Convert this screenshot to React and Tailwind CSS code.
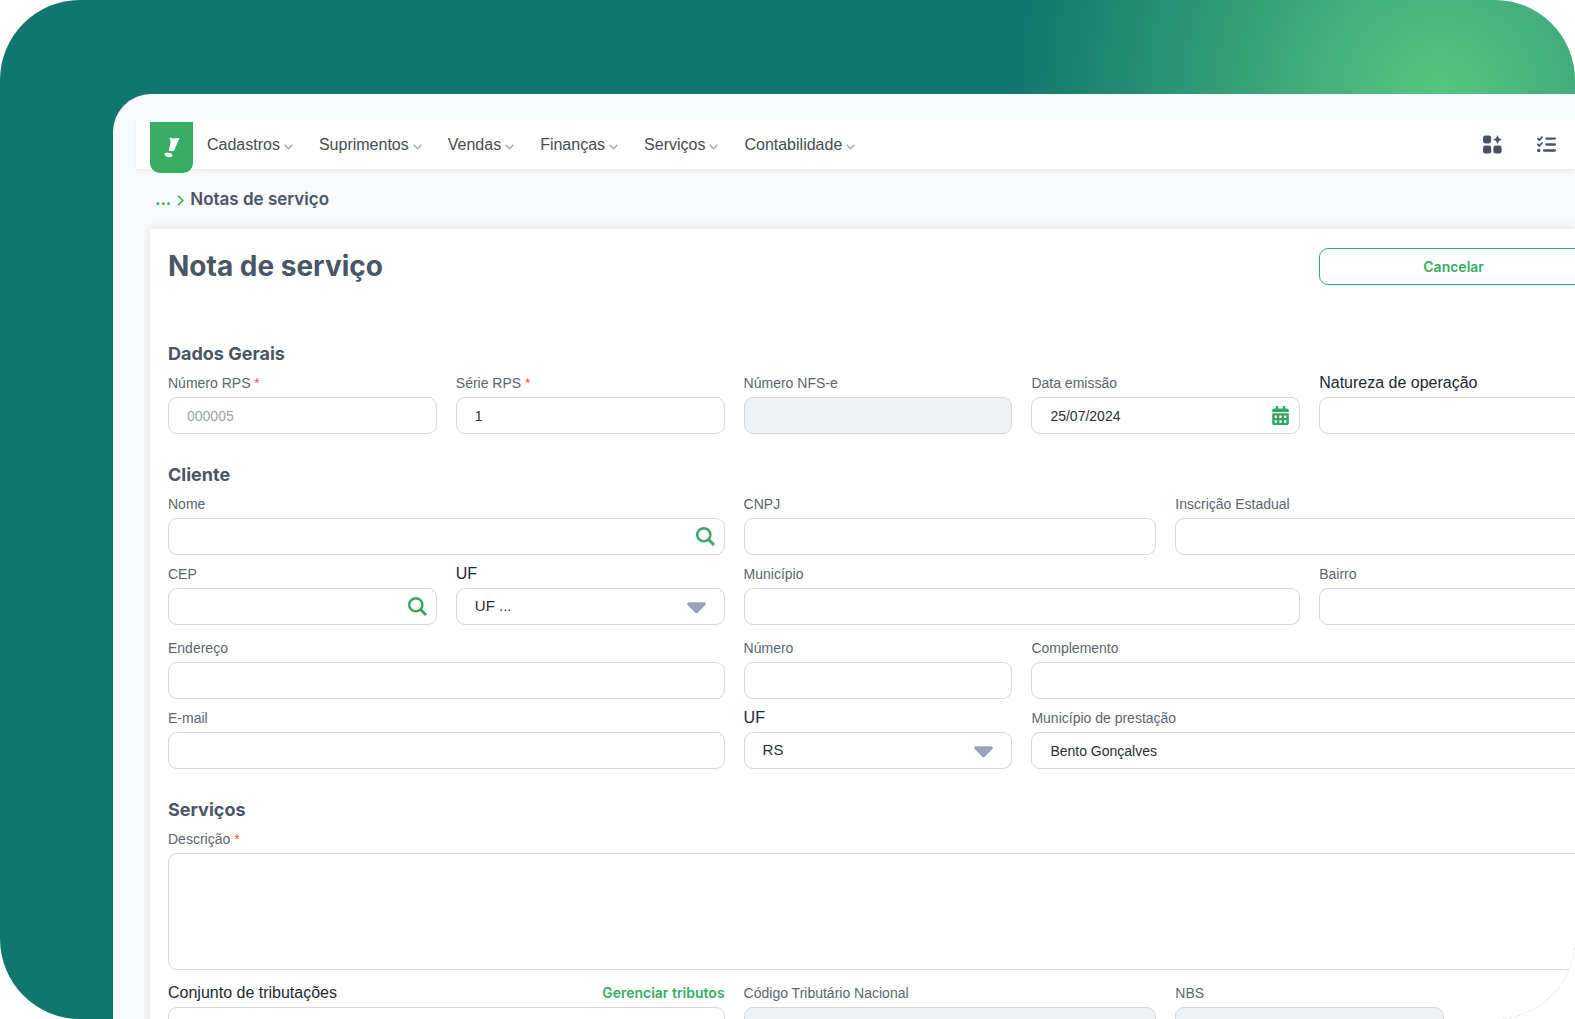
import { useState } from "react";
import { FaCalendarAlt } from "react-icons/fa";
import { FaListCheck } from "react-icons/fa6";

const menus = ["Cadastros", "Suprimentos", "Vendas", "Finanças", "Serviços", "Contabilidade"];

const Logo = () => (
  <a
    href="#"
    aria-label="Início"
    className="ml-[14px] mt-[2px] flex h-[51px] w-[43px] shrink-0 items-center justify-center self-start rounded-b-[10px] bg-[#36ad63]"
  >
    <svg width="16" height="21" viewBox="0 0 16 21" fill="#fff">
      <path d="M5.4 0.4 L9 1.4 L15.6 1 L14.4 3.6 L10.2 13.6 Q7.4 14.8 4.8 13.4 L6.6 5 L6.2 2.6 Z" />
      <ellipse cx="4.4" cy="17.8" rx="4.1" ry="2.2" transform="rotate(12 4.4 17.8)" />
    </svg>
  </a>
);

const AppsIcon = () => (
  <svg width="19" height="19" viewBox="0 0 19 19" fill="currentColor">
    <rect x="0" y="0.5" width="8.2" height="8" rx="2.4" />
    <rect x="0" y="10.6" width="8.2" height="8" rx="2.4" />
    <rect x="10.4" y="10.6" width="8.2" height="8" rx="2.4" />
    <path d="M14.5 0 L15.9 3.2 L19 4.6 L15.9 6 L14.5 9.2 L13.1 6 L10 4.6 L13.1 3.2 Z" />
  </svg>
);

const SearchIcon = () => (
  <svg width="19" height="19" viewBox="0 0 19 19" fill="none" stroke="currentColor">
    <circle cx="7.8" cy="7.8" r="6.6" strokeWidth="2.4" />
    <path d="M12.6 12.6 L18 18" strokeWidth="2.8" />
  </svg>
);

const Caret = () => (
  <svg
    width="19"
    height="12"
    viewBox="0 0 20 12"
    className="pointer-events-none absolute right-[19px] top-[14px] fill-[#98a2ba]"
  >
    <path d="M2 0 H18 C19.8 0 20.4 1.8 19.2 2.9 L11.4 11 C10.6 11.8 9.4 11.8 8.6 11 L0.8 2.9 C-0.4 1.8 0.2 0 2 0 Z" />
  </svg>
);

const control =
  "block w-full rounded-[9px] border border-[#d3d7dc] bg-white px-[18px] text-[#2b2f36] outline-none focus:border-[#36ad63]";

const Field = ({ id, label, span, strong, required, link, children }) => (
  <div className={span}>
    <div className="mb-1 flex items-center justify-between">
      <label
        htmlFor={id}
        className={
          strong
            ? "text-base leading-5 text-[#1f2733]"
            : "text-sm leading-5 text-[#5c6570]"
        }
      >
        {label}
        {required && <span className="text-[#f0524a]"> *</span>}
      </label>
      {link}
    </div>
    <div className="relative">{children}</div>
  </div>
);

const TextField = ({ id, label, span, strong, required, value = "", placeholder, disabled, icon, action, link }) => {
  const [text, setText] = useState(value);

  return (
    <Field id={id} label={label} span={span} strong={strong} required={required} link={link}>
      <input
        id={id}
        type="text"
        value={text}
        placeholder={placeholder}
        disabled={disabled}
        onChange={(e) => setText(e.target.value)}
        className={`${control} h-[37px] text-sm placeholder:text-[#9ca3af] disabled:bg-[#eff2f5]`}
      />
      {icon && (
        <button
          type="button"
          aria-label={action}
          className="absolute right-[10px] top-[9px] flex h-[19px] w-[19px] items-center justify-center text-[#36a562]"
        >
          {icon}
        </button>
      )}
    </Field>
  );
};

const SelectField = ({ id, label, span, options }) => (
  <Field id={id} label={label} span={span} strong>
    <select id={id} className={`${control} h-[37px] appearance-none text-[15px]`}>
      {options.map((option) => (
        <option key={option}>{option}</option>
      ))}
    </select>
    <Caret />
  </Field>
);

const Row = ({ children }) => <div className="grid grid-cols-10 gap-x-[19px]">{children}</div>;

const Section = ({ title, children }) => (
  <section className="mb-[29px]">
    <h2 className="mb-[7px] font-[Inter,sans-serif] text-lg font-bold leading-6 text-[#4a5565]">{title}</h2>
    {children}
  </section>
);

const App = () => {
  return (
    <div className="h-screen overflow-hidden rounded-[80px] bg-[#11766e] bg-[radial-gradient(circle_430px_at_right_135px_top_95px,#58c680,#11766e)] pl-[113px] pt-[94px] font-['Liberation_Sans',Arial,sans-serif]">
      <div className="min-h-full rounded-tl-[38px] bg-[#f9fafc] pt-[26px]">
        <header className="ml-[23px] flex h-[49px] items-center bg-white shadow-[0_2px_5px_rgba(0,0,0,0.06)]">
          <Logo />
          <nav className="ml-[14px] flex gap-[26px]">
            {menus.map((menu) => (
              <button key={menu} type="button" className="flex items-center gap-1 text-base text-[#484c52]">
                {menu}
                <svg width="9" height="6" viewBox="0 0 9 6" fill="none" stroke="#a3a8b0" strokeWidth="1.4" className="mt-1">
                  <path d="M0.7 0.8 L4.5 4.8 L8.3 0.8" />
                </svg>
              </button>
            ))}
          </nav>
          <div className="ml-auto mr-[19px] flex items-center gap-[35px] text-[#4a5263]">
            <button type="button" aria-label="Aplicativos">
              <AppsIcon />
            </button>
            <button type="button" aria-label="Tarefas">
              <FaListCheck size={19} />
            </button>
          </div>
        </header>

        <nav className="ml-[42px] flex h-[60px] items-center gap-[6px] pt-[2px] font-[Inter,sans-serif] text-[17px] font-semibold text-[#4a5565]">
          <a href="#" className="text-[#36ad63]">
            ...
          </a>
          <svg width="7" height="11" viewBox="0 0 7 11" fill="none" stroke="#36ad63" strokeWidth="1.6">
            <path d="M1 0.8 L5.8 5.5 L1 10.2" />
          </svg>
          <span>Notas de serviço</span>
        </nav>

        <main className="ml-[37px] bg-white pl-[18px] pt-[19px] shadow-[0_0_10px_rgba(0,0,0,0.1)]">
          {/* the form is wider than the window and runs off its right edge */}
          <form className="-mr-[13px]">
            <div className="mb-[57px] grid grid-cols-10 gap-x-[19px]">
              <h1 className="col-span-8 font-[Inter,sans-serif] text-[28px] font-bold leading-[37px] text-[#4a5565]">
                Nota de serviço
              </h1>
              <button
                type="button"
                className="col-span-2 h-[37px] rounded-[9px] border border-[#36ad63] bg-white font-[Inter,sans-serif] text-sm font-semibold text-[#36ad63]"
              >
                Cancelar
              </button>
            </div>

            <Section title="Dados Gerais">
              <Row>
                <TextField id="numero-rps" label="Número RPS" span="col-span-2" required placeholder="000005" />
                <TextField id="serie-rps" label="Série RPS" span="col-span-2" required value="1" />
                <TextField id="numero-nfse" label="Número NFS-e" span="col-span-2" disabled />
                <TextField
                  id="data-emissao"
                  label="Data emissão"
                  span="col-span-2"
                  value="25/07/2024"
                  icon={<FaCalendarAlt size={19} />}
                  action="Abrir calendário"
                />
                <TextField id="natureza" label="Natureza de operação" span="col-span-2" strong />
              </Row>
            </Section>

            <Section title="Cliente">
              <div className="flex flex-col gap-[13px]">
                <div className="flex flex-col gap-[9px]">
                  <Row>
                    <TextField id="nome" label="Nome" span="col-span-4" icon={<SearchIcon />} action="Buscar cliente" />
                    <TextField id="cnpj" label="CNPJ" span="col-span-3" />
                    <TextField id="inscricao" label="Inscrição Estadual" span="col-span-3" />
                  </Row>
                  <Row>
                    <TextField id="cep" label="CEP" span="col-span-2" icon={<SearchIcon />} action="Buscar CEP" />
                    <SelectField id="uf" label="UF" span="col-span-2" options={["UF ..."]} />
                    <TextField id="municipio" label="Município" span="col-span-4" />
                    <TextField id="bairro" label="Bairro" span="col-span-2" />
                  </Row>
                </div>
                <div className="flex flex-col gap-[9px]">
                  <Row>
                    <TextField id="endereco" label="Endereço" span="col-span-4" />
                    <TextField id="numero" label="Número" span="col-span-2" />
                    <TextField id="complemento" label="Complemento" span="col-span-4" />
                  </Row>
                  <Row>
                    <TextField id="email" label="E-mail" span="col-span-4" />
                    <SelectField id="uf-prestacao" label="UF" span="col-span-2" options={["RS"]} />
                    <TextField
                      id="municipio-prestacao"
                      label="Município de prestação"
                      span="col-span-4"
                      value="Bento Gonçalves"
                    />
                  </Row>
                </div>
              </div>
            </Section>

            <Section title="Serviços">
              <div className="flex flex-col gap-[13px]">
                <Field id="descricao" label="Descrição" required>
                  <textarea id="descricao" className={`${control} h-[117px] resize-none py-2 text-sm`} />
                </Field>
                <Row>
                  <TextField
                    id="tributacoes"
                    label="Conjunto de tributações"
                    span="col-span-4"
                    strong
                    link={
                      <a href="#" className="font-[Inter,sans-serif] text-sm font-semibold leading-5 text-[#36ad63]">
                        Gerenciar tributos
                      </a>
                    }
                  />
                  <TextField id="codigo" label="Código Tributário Nacional" span="col-span-3" disabled />
                  <TextField id="nbs" label="NBS" span="col-span-2" disabled />
                </Row>
              </div>
            </Section>
          </form>
        </main>
      </div>
    </div>
  );
};

export default App;
